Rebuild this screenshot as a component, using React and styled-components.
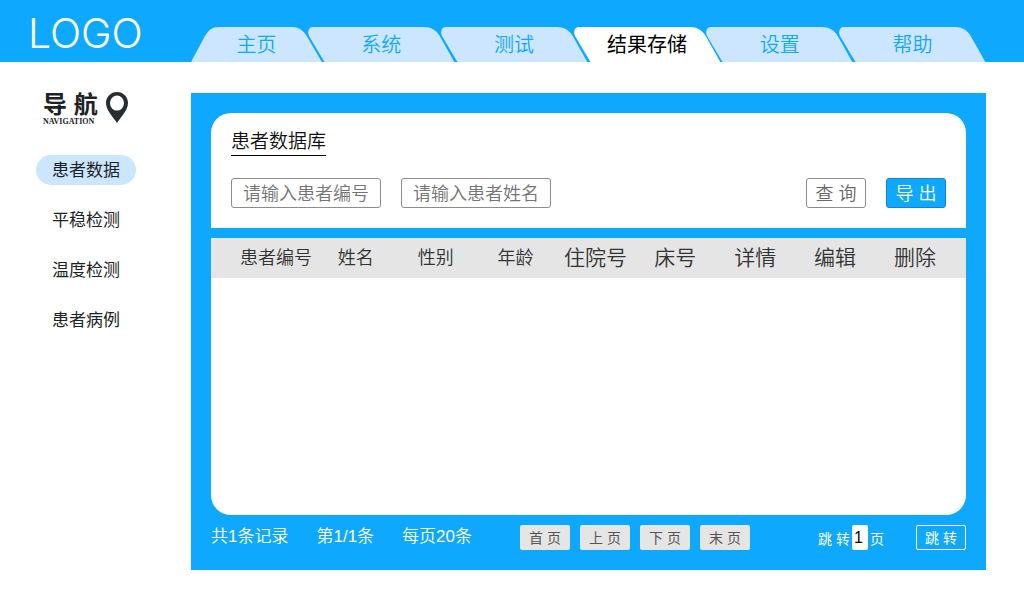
import { useState } from 'react';
import styled, { createGlobalStyle } from 'styled-components';

const GlobalStyle = createGlobalStyle`
  * {
    box-sizing: border-box;
  }

  body {
    margin: 0;
    background: #fff;
    color: #1c2326;
    font-family: 'Liberation Sans', 'Noto Sans CJK SC', sans-serif;
  }

  button,
  input {
    font-family: inherit;
    margin: 0;
  }
`;

const Header = styled.header`
  display: flex;
  align-items: flex-end;
  height: 62px;
  padding-right: 38px;
  background: #0fa8ff;
`;

const Logo = styled.a`
  flex: 0 0 191px;
  padding-left: 28px;
  color: #fff;
  font-family: Inter, 'Liberation Sans', sans-serif;
  font-size: 41px;
  font-weight: 300;
  line-height: 58px;
  text-decoration: none;
`;

const Tabs = styled.nav`
  display: flex;
  flex: 1;
`;

const Tab = styled.button`
  position: relative;
  flex: 147 1 147px;
  min-width: 0;
  height: 35px;
  margin-left: -14px;
  padding: 1px 0 0;
  border: 0;
  background: none;
  color: ${(props) => (props.$active ? '#000' : '#0fa8ff')};
  font-size: 20px;
  font-weight: ${(props) => (props.$active ? 400 : 350)};
  line-height: 34px;
  cursor: pointer;

  &:first-child {
    flex: 131 1 131px;
    margin-left: 0;
  }
`;

const TabShape = styled.svg`
  position: absolute;
  inset: 0;
  width: 100%;
  height: 100%;
  fill: ${(props) => (props.$active ? '#fff' : '#cce6ff')};
`;

const TabText = styled.span`
  position: relative;
`;

const Page = styled.div`
  display: flex;
  align-items: flex-start;
  padding-right: 38px;
`;

const Sidebar = styled.aside`
  flex: 0 0 191px;
  padding: 30px 55px 0 36px;
`;

const NavTitle = styled.div`
  display: flex;
  align-items: flex-start;
  gap: 8px;
  height: 63px;
  padding-left: 7px;
`;

const NavName = styled.div`
  font-size: 24px;
  font-weight: 700;
  line-height: 25px;
  white-space: nowrap;
`;

const NavSub = styled.div`
  font-family: 'Liberation Serif', serif;
  font-size: 8px;
  font-weight: 700;
  line-height: 10px;
`;

const NavItem = styled.a`
  display: block;
  height: 30px;
  margin-bottom: 20px;
  border-radius: 15px;
  background: ${(props) => (props.$active ? '#cce6ff' : 'transparent')};
  color: #1c2326;
  font-size: 17px;
  line-height: 31px;
  text-align: center;
  text-decoration: none;
  white-space: nowrap;
`;

const Panel = styled.main`
  flex: 1;
  min-width: 0;
  margin-top: 31px;
  padding: 20px;
  background: #0fa8ff;
`;

const SearchCard = styled.section`
  padding: 16px 20px 20px;
  border-radius: 20px 20px 0 0;
  background: #fff;
`;

const Title = styled.h1`
  display: inline-block;
  margin: 0 0 22px;
  border-bottom: 1px solid #000;
  color: #111;
  font-size: 19px;
  font-weight: 350;
  line-height: 26px;
`;

const SearchRow = styled.form`
  display: flex;
  gap: 20px;
`;

const SearchInput = styled.input`
  width: 150px;
  height: 30px;
  padding: 2px 10px 0 11px;
  border: 1px solid #8c8c8c;
  border-radius: 3px;
  color: #333;
  font-size: 18px;
  font-weight: 350;

  &::placeholder {
    color: #757575;
    opacity: 1;
  }
`;

const ActionButton = styled.button`
  width: 60px;
  height: 30px;
  padding: 2px 0 0;
  border: 1px solid ${(props) => (props.$primary ? '#0c82e0' : '#8c8c8c')};
  border-radius: 3px;
  background: ${(props) => (props.$primary ? '#0fa8ff' : '#fff')};
  color: ${(props) => (props.$primary ? '#fff' : '#666')};
  font-size: 18px;
  font-weight: 350;
  line-height: 26px;
  cursor: pointer;

  &:first-of-type {
    margin-left: auto;
  }
`;

const TableCard = styled.section`
  min-height: 277px;
  margin-top: 10px;
  overflow: hidden;
  border-radius: 0 0 20px 20px;
  background: #fff;
`;

const TableHead = styled.div`
  padding: 0 11px 0 25px;
  background: #e5e5e5;
`;

const Table = styled.table`
  width: 100%;
  border-collapse: collapse;
  table-layout: fixed;
`;

const Th = styled.th`
  height: 40px;
  padding: 0;
  color: #333;
  font-size: ${(props) => (props.$large ? 21 : 18)}px;
  font-weight: 350;
  line-height: 40px;
  white-space: nowrap;
`;

const Footer = styled.footer`
  display: flex;
  align-items: center;
  height: 25px;
  margin-top: 10px;
  color: #fff;
`;

const Info = styled.div`
  display: flex;
  gap: 28px;
  margin-right: 48px;
  padding-bottom: 2px;
  font-size: 17px;
  font-weight: 350;
  line-height: 21px;
  white-space: nowrap;
`;

const Pager = styled.div`
  display: flex;
  gap: 10px;
`;

const PageButton = styled.button`
  width: 50px;
  height: 25px;
  padding: 1px 0 0;
  border: 0;
  border-radius: 2px;
  background: #e5e5e5;
  color: #555;
  font-size: 14px;
  font-weight: 400;
  line-height: 24px;
  cursor: pointer;
`;

const Jump = styled.form`
  display: flex;
  align-items: center;
  margin-left: auto;
  font-size: 14px;
  white-space: nowrap;
`;

const JumpInput = styled.input`
  width: 16px;
  height: 25px;
  margin: 0 2px;
  padding: 1px 4px 0 2px;
  border: 0;
  border-radius: 2px;
  background: #fff;
  color: #000;
  font-size: 16px;
`;

const JumpButton = styled.button`
  width: 50px;
  height: 25px;
  margin-left: 32px;
  padding: 1px 0 0;
  border: 1px solid #fff;
  border-radius: 2px;
  background: transparent;
  color: #fff;
  font-size: 14px;
  line-height: 22px;
  cursor: pointer;
`;

const tabs = ['主页', '系统', '测试', '结果存储', '设置', '帮助'];
const menus = ['患者数据', '平稳检测', '温度检测', '患者病例'];
const pages = ['首 页', '上 页', '下 页', '末 页'];
const columns = [
  { name: '患者编号' },
  { name: '姓名' },
  { name: '性别' },
  { name: '年龄' },
  { name: '住院号', large: true },
  { name: '床号', large: true },
  { name: '详情', large: true },
  { name: '编辑', large: true },
  { name: '删除', large: true },
];

function TabButton({ name, first, active, onClick }) {
  return (
    <Tab type="button" $active={active} onClick={onClick}>
      <TabShape
        $active={active}
        viewBox={first ? '0 0 131 35' : '0 0 147 35'}
        preserveAspectRatio="none"
        aria-hidden="true"
      >
        {first ? (
          <path d="M0 35L14 9C18 3 21 0 28 0H101C109 0 113 4 117 11L131 35Z" />
        ) : (
          <path d="M5 0H116C125 0 129 4 133 11L146.500 35H16.500L1 9C-1 4 1 0 5 0Z" />
        )}
      </TabShape>
      <TabText>{name}</TabText>
    </Tab>
  );
}

function PinIcon() {
  return (
    <svg width="22" height="31" viewBox="0 0 22 31" aria-hidden="true">
      <path
        fill="#262e32"
        fillRule="evenodd"
        d="M11 0C4.900 0 0 4.900 0 11C0 18 6 23.500 11 31C16 23.500 22 18 22 11C22 4.900 17.100 0 11 0ZM11 3.600A7 7.500 0 0 1 11 18.600A7 7.500 0 0 1 11 3.600Z"
      />
    </svg>
  );
}

function App() {
  const [tab, setTab] = useState('结果存储');
  const [menu, setMenu] = useState('患者数据');
  const [page, setPage] = useState('1');

  return (
    <>
      <GlobalStyle />
      <Header>
        <Logo href="#">LOGO</Logo>
        <Tabs>
          {tabs.map((name, i) => (
            <TabButton
              key={name}
              name={name}
              first={i === 0}
              active={name === tab}
              onClick={() => setTab(name)}
            />
          ))}
        </Tabs>
      </Header>

      <Page>
        <Sidebar>
          <NavTitle>
            <div>
              <NavName>导 航</NavName>
              <NavSub>NAVIGATION</NavSub>
            </div>
            <PinIcon />
          </NavTitle>
          <nav>
            {menus.map((name) => (
              <NavItem key={name} href="#" $active={name === menu} onClick={() => setMenu(name)}>
                {name}
              </NavItem>
            ))}
          </nav>
        </Sidebar>

        <Panel>
          <SearchCard>
            <Title>患者数据库</Title>
            <SearchRow onSubmit={(e) => e.preventDefault()}>
              <SearchInput aria-label="患者编号" placeholder="请输入患者编号" />
              <SearchInput aria-label="患者姓名" placeholder="请输入患者姓名" />
              <ActionButton type="submit">查 询</ActionButton>
              <ActionButton type="button" $primary>导 出</ActionButton>
            </SearchRow>
          </SearchCard>

          <TableCard>
            <TableHead>
              <Table>
                <thead>
                  <tr>
                    {columns.map((col) => (
                      <Th key={col.name} scope="col" $large={col.large}>{col.name}</Th>
                    ))}
                  </tr>
                </thead>
              </Table>
            </TableHead>
          </TableCard>

          <Footer>
            <Info>
              <span>共1条记录</span>
              <span>第1/1条</span>
              <span>每页20条</span>
            </Info>
            <Pager>
              {pages.map((name) => (
                <PageButton key={name} type="button">{name}</PageButton>
              ))}
            </Pager>
            <Jump onSubmit={(e) => e.preventDefault()}>
              <label htmlFor="page">跳 转</label>
              <JumpInput id="page" value={page} onChange={(e) => setPage(e.target.value)} />
              <span>页</span>
              <JumpButton type="submit">跳 转</JumpButton>
            </Jump>
          </Footer>
        </Panel>
      </Page>
    </>
  );
}

export default App;
